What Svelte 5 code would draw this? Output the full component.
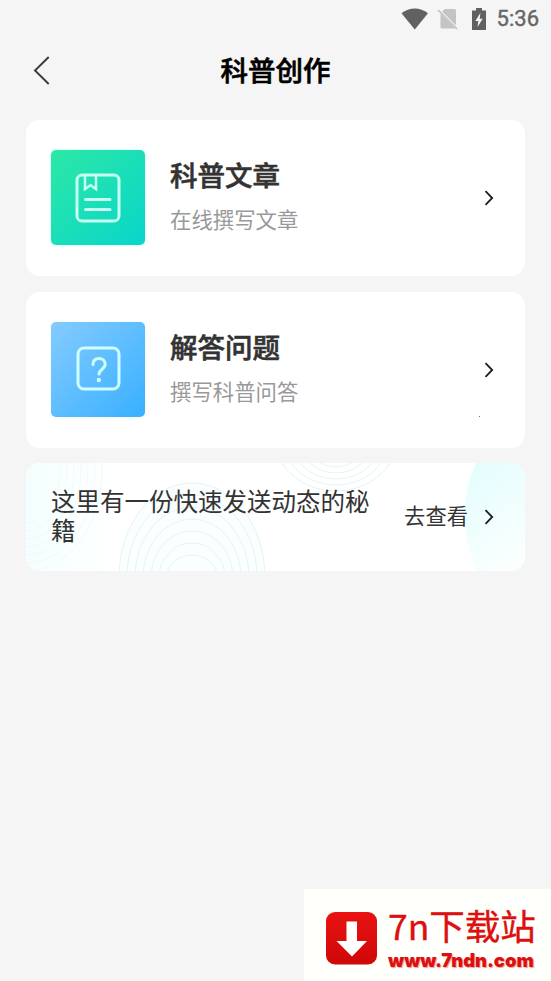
<script lang="ts">
	interface Entry {
		kind: 'article' | 'question';
		title: string;
		hint: string;
	}

	const entries: Entry[] = [
		{ kind: 'article', title: '科普文章', hint: '在线撰写文章' },
		{ kind: 'question', title: '解答问题', hint: '撰写科普问答' }
	];

	const rings = [0, 1, 2, 3, 4, 5, 6];
</script>

{#snippet chevron()}
	<svg class="chevron" width="12" height="18" viewBox="0 0 12 18">
		<path d="M1.500 2.2 8.200 9 1.500 15.8" fill="none" stroke="#1c1c1c" stroke-width="1.8" />
	</svg>
{/snippet}

<div class="screen">
	<div class="status-bar">
		<svg width="28" height="22" viewBox="0 0 28 22">
			<path d="M.5 5.2C8.5-1.2 19-1.2 27 5.2L13.8 21.5Z" fill="#616161" />
		</svg>
		<svg class="sim" width="22" height="24" viewBox="0 0 22 24">
			<path d="M8 2H17.500A1.500 1.500 0 0 1 19 3.500V18.500L5 4.500ZM3.500 6.500 18.500 21.500H5A1.500 1.500 0 0 1 3.500 20Z" fill="#c4c4c4" />
			<path d="m1 3 19 19" stroke="#bdbdbd" stroke-width="1.500" />
		</svg>
		<svg class="battery" width="16" height="24" viewBox="0 0 16 24">
			<path d="M5 1h6v2.500h4V23H1V3.500h4Z" fill="#616161" />
			<path d="M9.400 6 4.300 14h3l-.8 6 5.200-8.200h-3Z" fill="#f5f5f5" />
		</svg>
		<span class="clock">5:36</span>
	</div>

	<header class="nav">
		<svg class="back" width="18" height="30" viewBox="0 0 18 30">
			<path d="M15.700 2 2 15.500 15.700 29" fill="none" stroke="#3a3a3a" stroke-width="1.900" />
		</svg>
		<h1>科普创作</h1>
	</header>

	<main>
		{#each entries as entry}
			<section class="card {entry.kind}">
				<div class="tile">
					{#if entry.kind === 'article'}
						<svg width="46" height="50" viewBox="0 0 46 50" fill="none" stroke="#c4fff0" stroke-width="3">
							<rect x="2" y="2" width="42" height="46" rx="5" />
							<path d="M10 2v14l5.500-3.800L21 16V2" stroke-width="2.500" />
							<path d="M10.500 26.500h24.500M10.500 36.500h24.500" stroke-linecap="round" />
						</svg>
					{:else}
						<svg width="46" height="46" viewBox="0 0 46 46" fill="none" stroke="#cefffa" stroke-width="3">
							<rect x="3" y="2" width="41" height="41" rx="6" />
							<path d="M18 18.500c0-4 2.500-6 6-6s6.200 2.300 6.200 5.800c0 4.800-6.200 5-6.200 9.700" stroke-linecap="round" />
							<circle cx="23.800" cy="34" r="2.200" fill="#cefffa" stroke="none" />
						</svg>
					{/if}
				</div>
				<div class="label">
					<h2>{entry.title}</h2>
					<p>{entry.hint}</p>
				</div>
				{@render chevron()}
				{#if entry.kind === 'question'}
					<i class="speck"></i>
				{/if}
			</section>
		{/each}

		<section class="banner">
			<svg class="pattern" width="499" height="108" viewBox="0 0 499 108" fill="none">
				<defs>
					<linearGradient id="edge" x1="0" x2="1">
						<stop offset="0" stop-color="#f4fefe" />
						<stop offset="1" stop-color="#fff" />
					</linearGradient>
					<linearGradient id="blob" x1="0" y1="0" x2=".5" y2="1">
						<stop offset=".1" stop-color="#e0fdfd" />
						<stop offset=".8" stop-color="#fafffe" />
					</linearGradient>
				</defs>
				<rect width="90" height="108" fill="url(#edge)" />
				<ellipse cx="166" cy="108" rx="72" ry="88" fill="#fafefe" />
				<ellipse cx="494" cy="52" rx="55" ry="86" fill="url(#blob)" />
				{#each rings as n}
					<ellipse cx="166" cy="114" rx={73 - n * 8} ry={94 - n * 12} stroke="#e2f4f3" />
					<ellipse cx="0" cy="8" rx={76 - n * 7} ry={100 - n * 8} stroke="#f1f9f9" />
				{/each}
				{#each rings.slice(0, 5) as n}
					<ellipse cx="310" cy="-20" rx={59 - n * 8} ry={48 - n * 6} stroke="#e2f4f3" />
				{/each}
			</svg>
			<p class="tip">这里有一份快速发送动态的秘籍</p>
			<span class="look">去查看</span>
			{@render chevron()}
		</section>
	</main>

	<footer class="site">
		<svg width="52" height="53" viewBox="0 0 52 53">
			<defs>
				<linearGradient id="red" x1="0" y1="0" x2="0" y2="1">
					<stop offset="0" stop-color="#e91212" />
					<stop offset="1" stop-color="#cf0808" />
				</linearGradient>
			</defs>
			<rect width="51" height="52.500" rx="9" fill="url(#red)" />
			<path d="M20.500 9.500h10.500V29H41L26 44.500 10.500 29h10Z" fill="#fff" />
		</svg>
		<div class="site-text">
			<span class="site-name">7n下载站</span>
			<span class="site-url">www.7ndn.com</span>
		</div>
	</footer>
</div>

<style>
	:global(body) {
		background: #f5f5f5;
	}

	.screen {
		height: 981px;
		display: flex;
		flex-direction: column;
		overflow: hidden;
		background: #f5f5f5;
		font-family: "Noto Sans CJK SC", sans-serif;
		color: #333;
	}

	h1,
	h2,
	p {
		margin: 0;
	}

	svg {
		display: block;
		flex-shrink: 0;
	}

	.status-bar {
		height: 38px;
		display: flex;
		align-items: center;
		justify-content: flex-end;
		padding-right: 12px;
	}

	.sim {
		margin-left: 8px;
	}

	.battery {
		margin-left: 12px;
	}

	.clock {
		margin-left: 10px;
		font: 400 22px/38px Roboto, sans-serif;
		-webkit-text-stroke: 0.4px #666;
		color: #666;
	}

	.nav {
		height: 64px;
		display: grid;
		grid-template-columns: 60px 1fr 60px;
		align-items: center;
	}

	.back {
		margin-left: 33px;
	}

	.nav h1 {
		margin-bottom: 2px;
		text-align: center;
		font-size: 27.5px;
		line-height: 40px;
		font-weight: 500;
		-webkit-text-stroke: 0.6px #000;
		color: #000;
	}

	main {
		display: flex;
		flex-direction: column;
		gap: 15.500px;
		padding: 18px 26px 0;
	}

	.card {
		position: relative;
		height: 156px;
		box-sizing: border-box;
		display: flex;
		align-items: center;
		padding: 0 29px 0 25px;
		border-radius: 14px;
		background: #fff;
	}

	.tile {
		width: 94px;
		height: 95px;
		display: flex;
		align-items: center;
		justify-content: center;
		margin-bottom: 1px;
		border-radius: 5px;
	}

	.article .tile {
		background: linear-gradient(135deg, #2ce8a5, #09d5cb);
		box-shadow: 0 0 3px #b5fff5;
	}

	.question .tile {
		background: linear-gradient(135deg, #85cbff, #38b0ff);
		box-shadow: 0 0 2px #d5f5ff;
	}

	.label {
		flex: 1;
		margin: 0 0 2px 25px;
	}

	.label h2 {
		font-size: 27.5px;
		line-height: 43px;
		font-weight: 500;
		-webkit-text-stroke: 0.6px #333;
	}

	.label p {
		font-size: 21.4px;
		line-height: 45px;
		color: #999;
	}

	.speck {
		position: absolute;
		right: 45px;
		bottom: 31px;
		width: 1px;
		height: 1px;
		background: #777;
	}

	.banner {
		position: relative;
		height: 108px;
		box-sizing: border-box;
		display: flex;
		align-items: center;
		padding: 0 29px 0 25px;
		border-radius: 14px;
		overflow: hidden;
		background: #fff;
	}

	.pattern {
		position: absolute;
		inset: 0;
	}

	.tip,
	.look,
	.banner .chevron {
		position: relative;
	}

	.tip {
		width: 320px;
		margin-bottom: 5px;
		font-size: 24.5px;
		line-height: 29px;
	}

	.look {
		margin: 0 16px 5px auto;
		font-size: 21.300px;
		line-height: 30px;
	}

	.site {
		width: 247px;
		height: 92px;
		box-sizing: border-box;
		display: flex;
		align-items: center;
		gap: 10px;
		margin-top: auto;
		align-self: flex-end;
		padding: 6px 0 0 22px;
		background: #fffffb;
		color: #dc1010;
	}

	.site-text {
		display: flex;
		flex-direction: column;
		gap: 4px;
		margin-top: -1px;
		white-space: nowrap;
	}

	.site-name {
		font-size: 35.500px;
		line-height: 40px;
		-webkit-text-stroke: 0.4px #dc1010;
	}

	.site-url {
		font: 900 18.400px/22px Inter, sans-serif;
		text-shadow: 1px 1px 1px #e9a0a0;
	}
</style>
